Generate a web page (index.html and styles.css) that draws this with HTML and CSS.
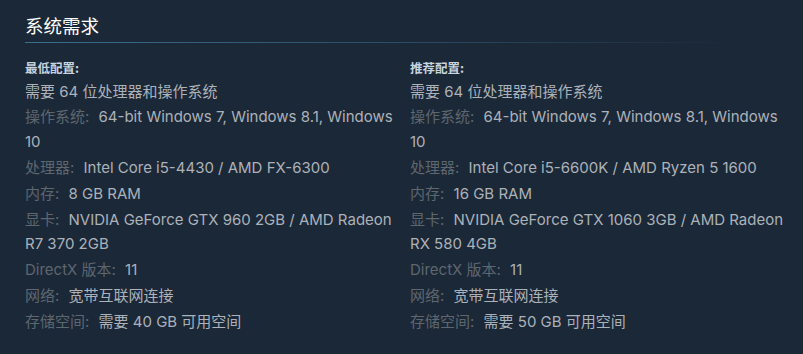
FILE: index.html
```html
<!DOCTYPE html>
<html lang="zh-CN">
<head>
<meta charset="utf-8">
<title>系统需求</title>
<link rel="stylesheet" href="styles.css">
</head>
<body>
<div class="sysreq">
  <h2 class="title">系统需求</h2>
  <div class="cols">
    <div class="col">
      <div class="head">最低配置:</div>
      <ul class="list">
        <li>需要 64 位处理器和操作系统</li>
        <li><span class="lbl">操作系统:</span> 64-bit Windows 7, Windows 8.1, Windows 10</li>
        <li><span class="lbl">处理器:</span> Intel Core i5-4430 / AMD FX-6300</li>
        <li><span class="lbl">内存:</span> 8 GB RAM</li>
        <li><span class="lbl">显卡:</span> NVIDIA GeForce GTX 960 2GB / AMD Radeon R7 370 2GB</li>
        <li><span class="lbl">DirectX 版本:</span> 11</li>
        <li><span class="lbl">网络:</span> 宽带互联网连接</li>
        <li><span class="lbl">存储空间:</span> 需要 40 GB 可用空间</li>
      </ul>
    </div>
    <div class="col">
      <div class="head">推荐配置:</div>
      <ul class="list">
        <li>需要 64 位处理器和操作系统</li>
        <li><span class="lbl">操作系统:</span> 64-bit Windows 7, Windows 8.1, Windows 10</li>
        <li><span class="lbl">处理器:</span> Intel Core i5-6600K / AMD Ryzen 5 1600</li>
        <li><span class="lbl">内存:</span> 16 GB RAM</li>
        <li><span class="lbl">显卡:</span> NVIDIA GeForce GTX 1060 3GB / AMD Radeon RX 580 4GB</li>
        <li><span class="lbl">DirectX 版本:</span> 11</li>
        <li><span class="lbl">网络:</span> 宽带互联网连接</li>
        <li><span class="lbl">存储空间:</span> 需要 50 GB 可用空间</li>
      </ul>
    </div>
  </div>
</div>
</body>
</html>
```

FILE: styles.css
```css
html, body {
  margin: 0;
  padding: 0;
  background: #1b2838;
}

body {
  font-family: Inter, "Noto Sans CJK SC", sans-serif;
  color: #acb2b8;
}

.sysreq {
  padding: 13px 0 0 25px;
  width: 765px;
}

.title {
  margin: 0;
  font-size: 18.5px;
  font-weight: normal;
  line-height: 24px;
  color: #ffffff;
  padding-bottom: 6px;
  border-bottom: 1px solid transparent;
  background: linear-gradient(to right, #3b6e8e 0%, #2c4f69 50%, rgba(27, 40, 56, 0) 100%) no-repeat left bottom / 715px 1px;
  font-family: "Noto Sans CJK SC", sans-serif;
}

.cols {
  display: flex;
  margin-top: 14px;
}

.col {
  width: 380px;
  flex: none;
}

.col + .col {
  margin-left: 5px;
}

.head {
  font-size: 12.5px;
  font-weight: bold;
  line-height: 20px;
  color: #c6d4df;
  font-family: "Noto Sans CJK SC", sans-serif;
}

.list {
  list-style: none;
  margin: 0;
  padding: 1.5px 0 0;
  font-size: 15px;
}

.list li {
  line-height: 24.5px;
  margin-bottom: 1.4px;
}

.lbl {
  color: #5e666e;
  margin-right: 5px;
}
```
